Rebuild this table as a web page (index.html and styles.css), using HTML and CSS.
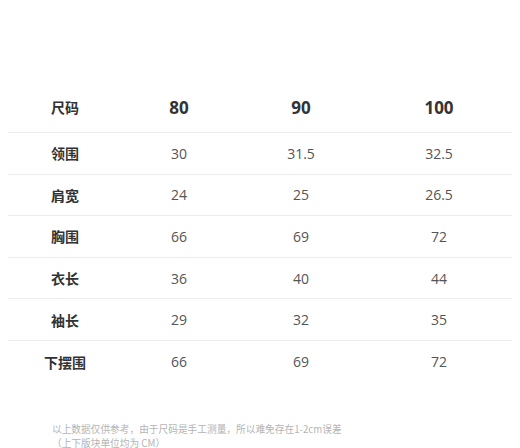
FILE: index.html
```html
<!DOCTYPE html>
<html lang="zh-CN">
<head>
<meta charset="utf-8">
<link rel="stylesheet" href="styles.css">
</head>
<body>
<div class="page">
  <div class="size-table">
    <div class="row head">
      <div class="cell label">尺码</div>
      <div class="cell">80</div>
      <div class="cell">90</div>
      <div class="cell">100</div>
    </div>
    <div class="row">
      <div class="cell label">领围</div>
      <div class="cell">30</div>
      <div class="cell">31.5</div>
      <div class="cell">32.5</div>
    </div>
    <div class="row">
      <div class="cell label">肩宽</div>
      <div class="cell">24</div>
      <div class="cell">25</div>
      <div class="cell">26.5</div>
    </div>
    <div class="row">
      <div class="cell label">胸围</div>
      <div class="cell">66</div>
      <div class="cell">69</div>
      <div class="cell">72</div>
    </div>
    <div class="row">
      <div class="cell label">衣长</div>
      <div class="cell">36</div>
      <div class="cell">40</div>
      <div class="cell">44</div>
    </div>
    <div class="row">
      <div class="cell label">袖长</div>
      <div class="cell">29</div>
      <div class="cell">32</div>
      <div class="cell">35</div>
    </div>
    <div class="row last">
      <div class="cell label">下摆围</div>
      <div class="cell">66</div>
      <div class="cell">69</div>
      <div class="cell">72</div>
    </div>
  </div>
  <p class="note">以上数据仅供参考，由于尺码是手工测量，所以难免存在1-2cm误差<br>（上下版块单位均为 CM）</p>
</div>
</body>
</html>
```

FILE: styles.css
```css
html, body {
  margin: 0;
  padding: 0;
  background: #fff;
}
.page {
  width: 520px;
  height: 448px;
  overflow: hidden;
  padding-top: 82px;
  box-sizing: border-box;
  font-family: "Open Sans", "Noto Sans CJK SC", sans-serif;
}
.size-table {
  margin: 0 8px;
  width: 504px;
}
.row {
  display: grid;
  grid-template-columns: 114px 114px 130px 146px;
  height: 41.6px;
  box-sizing: border-box;
  border-bottom: 1px solid #ececec;
  align-items: center;
}
.row.head {
  height: 51px;
}
.row.last {
  border-bottom: none;
}
.cell {
  text-align: center;
  font-size: 14px;
  color: #555;
}
.cell.label {
  font-family: "Noto Sans CJK SC", sans-serif;
  font-weight: 700;
  color: #333;
  font-size: 14px;
}
.head .cell {
  font-size: 17px;
  font-weight: 700;
  color: #333;
}
.head .cell.label {
  font-size: 14px;
}
.note {
  margin: 39px 0 0 52px;
  font-family: "Noto Sans CJK SC", sans-serif;
  font-size: 9.7px;
  line-height: 14px;
  color: #b4b4b4;
}
```
